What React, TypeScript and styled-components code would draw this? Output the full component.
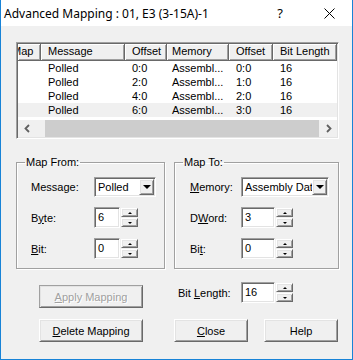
import React, { FC, ReactNode } from "react";
import styled, { createGlobalStyle } from "styled-components";

const columns = [
  { title: "Map", width: 23, indent: -6 },
  { title: "Message", width: 84, indent: 7 },
  { title: "Offset", width: 42, indent: 7 },
  { title: "Memory", width: 62, indent: 5 },
  { title: "Offset", width: 44, indent: 7 },
  { title: "Bit Length", width: 64, indent: 7 },
];

const rows = [
  ["", "Polled", "0:0", "Assembl...", "0:0", "16"],
  ["", "Polled", "2:0", "Assembl...", "1:0", "16"],
  ["", "Polled", "4:0", "Assembl...", "2:0", "16"],
  ["", "Polled", "6:0", "Assembl...", "3:0", "16"],
];

const gridTemplate = columns.map((c) => `${c.width}px`).join(" ");

const sunken = `
  border-style: solid;
  border-width: 1px;
  border-color: #a0a0a0 #fff #fff #a0a0a0;
  box-shadow: inset 1px 1px 0 #696969, inset -1px -1px 0 #e3e3e3;
`;

const raised = `
  border-style: solid;
  border-width: 1px;
  border-color: #fff #696969 #696969 #fff;
  box-shadow: inset 1px 1px 0 #e3e3e3, inset -1px -1px 0 #a0a0a0;
  background: #f0f0f0;
`;

const GlobalStyle = createGlobalStyle`
  html, body {
    margin: 0;
    padding: 0;
    background: #fff;
  }
  body {
    font-family: "Liberation Sans", Arial, sans-serif;
  }
  * {
    box-sizing: border-box;
  }
`;

type SpinProps = { value: string; editWidth: number };

const SpinEdit: FC<SpinProps> = ({ value, editWidth }) => (
  <StyledSpin>
    <StyledEdit $width={editWidth}>{value}</StyledEdit>
    <StyledSpinner>
      <StyledSpinButton>
        <StyledTinyArrow $up />
      </StyledSpinButton>
      <StyledSpinButton>
        <StyledTinyArrow />
      </StyledSpinButton>
    </StyledSpinner>
  </StyledSpin>
);

type ComboProps = { value: string; width: number };

const Combo: FC<ComboProps> = ({ value, width }) => (
  <StyledCombo $width={width}>
    <StyledComboText>{value}</StyledComboText>
    <StyledDropButton>
      <StyledDropArrow />
    </StyledDropButton>
  </StyledCombo>
);

type FieldProps = { label: ReactNode; labelWidth: number; children: ReactNode };

const Field: FC<FieldProps> = ({ label, labelWidth, children }) => (
  <StyledField>
    <StyledLabel $width={labelWidth}>{label}</StyledLabel>
    {children}
  </StyledField>
);

const Chevron: FC<{ right?: boolean }> = ({ right }) => (
  <svg width="8" height="9" viewBox="0 0 8 9">
    <polyline
      points={right ? "2,1 5.5,4.5 2,8" : "6,1 2.5,4.5 6,8"}
      fill="none"
      stroke="#606060"
      strokeWidth="1.8"
    />
  </svg>
);

export default function App() {
  return (
    <>
      <GlobalStyle />
      <StyledWindow>
        <StyledTitleBar>
          <StyledTitle>Advanced Mapping : 01, E3 (3-15A)-1</StyledTitle>
          <StyledCaptionButton>
            <StyledHelpGlyph>?</StyledHelpGlyph>
          </StyledCaptionButton>
          <StyledCaptionButton>
            <svg width="11" height="11" viewBox="0 0 11 11">
              <path d="M0.5 0.5 L10.5 10.5 M10.5 0.5 L0.5 10.5" stroke="#000" strokeWidth="1" />
            </svg>
          </StyledCaptionButton>
        </StyledTitleBar>

        <StyledBody>
          <StyledListView>
            <StyledHeaderRow>
              {columns.map((c, i) => (
                <StyledHeaderCell key={i} $indent={c.indent}>
                  {c.title}
                </StyledHeaderCell>
              ))}
            </StyledHeaderRow>
            {rows.map((r, i) => (
              <StyledRow key={i} $selected={i === rows.length - 1}>
                {r.map((v, j) => (
                  <StyledCell key={j} $indent={columns[j].indent}>
                    {v}
                  </StyledCell>
                ))}
              </StyledRow>
            ))}
            <StyledListFill />
            <StyledScrollBar>
              <StyledScrollArrow>
                <Chevron />
              </StyledScrollArrow>
              <StyledTrack>
                <StyledThumb />
              </StyledTrack>
              <StyledScrollArrow>
                <Chevron right />
              </StyledScrollArrow>
            </StyledScrollBar>
          </StyledListView>

          <StyledGroups>
            <StyledGroup $width={149}>
              <legend>Map From:</legend>
              <StyledGroupBody $padLeft={14}>
                <Field label="Message:" labelWidth={63}>
                  <Combo value="Polled" width={62} />
                </Field>
                <Field label={<>B<u>y</u>te:</>} labelWidth={63}>
                  <SpinEdit value="6" editWidth={26} />
                </Field>
                <Field label={<><u>B</u>it:</>} labelWidth={63}>
                  <SpinEdit value="0" editWidth={26} />
                </Field>
              </StyledGroupBody>
            </StyledGroup>
            <StyledGroup $width={165}>
              <legend>Map To:</legend>
              <StyledGroupBody $padLeft={15}>
                <Field label={<><u>M</u>emory:</>} labelWidth={51}>
                  <Combo value="Assembly Data" width={88} />
                </Field>
                <Field label={<>D<u>W</u>ord:</>} labelWidth={51}>
                  <SpinEdit value="3" editWidth={34} />
                </Field>
                <Field label={<>Bi<u>t</u>:</>} labelWidth={51}>
                  <SpinEdit value="0" editWidth={34} />
                </Field>
              </StyledGroupBody>
            </StyledGroup>
          </StyledGroups>

          <StyledActions>
            <StyledButton disabled $col={1}>
              <u>A</u>pply Mapping
            </StyledButton>
            <StyledBitLength>
              <StyledLabel $width={63}>
                Bit <u>L</u>ength:
              </StyledLabel>
              <SpinEdit value="16" editWidth={34} />
            </StyledBitLength>
            <StyledButton $col={1}>
              <u>D</u>elete Mapping
            </StyledButton>
            <StyledButton $col={3}>
              <u>C</u>lose
            </StyledButton>
            <StyledButton $col={5}>Help</StyledButton>
          </StyledActions>
        </StyledBody>
      </StyledWindow>
    </>
  );
}

const StyledWindow = styled.div`
  width: 353px;
  height: 360px;
  border: 1px solid #1883d7;
  border-top: none;
  background: #f0f0f0;
  display: flex;
  flex-direction: column;
  font-size: 11px;
  color: #000;
`;

const StyledTitleBar = styled.div`
  height: 26px;
  flex: none;
  background: #fff;
  display: flex;
  align-items: center;
  padding-left: 3px;
`;

const StyledTitle = styled.div`
  flex: 1;
  font-family: "Noto Sans", "Open Sans", sans-serif;
  font-size: 12px;
  white-space: nowrap;
`;

const StyledCaptionButton = styled.div`
  width: 46px;
  height: 26px;
  display: flex;
  align-items: center;
  justify-content: center;
`;

const StyledHelpGlyph = styled.span`
  font-family: "Noto Sans", sans-serif;
  font-size: 13px;
  margin-right: 6px;
`;

const StyledBody = styled.div`
  flex: 1;
  padding: 16px 13px 0 15px;
  display: flex;
  flex-direction: column;
`;

const StyledListView = styled.div`
  ${sunken}
  width: 323px;
  height: 97px;
  padding: 1px;
  background: #fff;
  display: flex;
  flex-direction: column;
  overflow: hidden;
`;

const StyledHeaderRow = styled.div`
  display: grid;
  grid-template-columns: ${gridTemplate};
  height: 17px;
  flex: none;
`;

const StyledHeaderCell = styled.div<{ $indent: number }>`
  background: #f0f0f0;
  border-right: 1px solid #696969;
  border-bottom: 1px solid #696969;
  box-shadow: inset 1px 1px 0 #fff, inset -1px -1px 0 #a0a0a0;
  line-height: 15px;
  text-indent: ${(p) => p.$indent}px;
  white-space: nowrap;
  overflow: hidden;
`;

const StyledRow = styled.div<{ $selected?: boolean }>`
  display: grid;
  grid-template-columns: ${gridTemplate};
  height: 14px;
  flex: none;
  background: ${(p) => (p.$selected ? "#f0f0f0" : "#fff")};
`;

const StyledCell = styled.div<{ $indent: number }>`
  line-height: 14px;
  text-indent: ${(p) => p.$indent}px;
  white-space: nowrap;
  overflow: hidden;
`;

const StyledListFill = styled.div`
  flex: 1;
`;

const StyledScrollBar = styled.div`
  height: 17px;
  flex: none;
  display: flex;
  background: #f0f0f0;
`;

const StyledScrollArrow = styled.div`
  width: 17px;
  display: flex;
  align-items: center;
  justify-content: center;
`;

const StyledTrack = styled.div`
  flex: 1;
  display: flex;
  padding: 0 1px 0 10px;
`;

const StyledThumb = styled.div`
  flex: 1;
  background: #cdcdcd;
`;

const StyledGroups = styled.div`
  display: flex;
  gap: 9px;
  margin-top: 17px;
`;

const StyledGroup = styled.fieldset<{ $width: number }>`
  width: ${(p) => p.$width}px;
  margin: 0;
  padding: 0;
  border: 1px solid #a0a0a0;
  box-shadow: inset 1px 1px 0 #fff, 1px 1px 0 #fff;

  legend {
    font-size: 11px;
    line-height: 13px;
    padding: 0 1px;
    margin-left: 8px;
  }
`;

const StyledGroupBody = styled.div<{ $padLeft: number }>`
  display: flex;
  flex-direction: column;
  gap: 10px;
  padding: 7px 0 9px ${(p) => p.$padLeft}px;
`;

const StyledField = styled.div`
  display: flex;
  align-items: center;
  height: 21px;
`;

const StyledLabel = styled.div<{ $width: number }>`
  width: ${(p) => p.$width}px;
  flex: none;
  white-space: nowrap;
`;

const StyledCombo = styled.div<{ $width: number }>`
  ${sunken}
  width: ${(p) => p.$width}px;
  height: 20px;
  background: #fff;
  display: flex;
  align-items: stretch;
  padding: 1px;
`;

const StyledComboText = styled.div`
  flex: 1;
  overflow: hidden;
  white-space: nowrap;
  padding-left: 2px;
  line-height: 16px;
`;

const StyledDropButton = styled.div`
  ${raised}
  width: 15px;
  flex: none;
  display: flex;
  align-items: center;
  justify-content: center;
`;

const StyledDropArrow = styled.div`
  width: 0;
  height: 0;
  border-left: 4px solid transparent;
  border-right: 4px solid transparent;
  border-top: 4px solid #000;
`;

const StyledSpin = styled.div`
  display: flex;
  gap: 1px;
  height: 21px;
`;

const StyledEdit = styled.div<{ $width: number }>`
  ${sunken}
  width: ${(p) => p.$width}px;
  background: #fff;
  padding: 1px 0 0 3px;
  line-height: 16px;
`;

const StyledSpinner = styled.div`
  width: 17px;
  display: flex;
  flex-direction: column;
  gap: 1px;
  padding: 1px 0;
`;

const StyledSpinButton = styled.div`
  ${raised}
  flex: 1;
  display: flex;
  align-items: center;
  justify-content: center;
`;

const StyledTinyArrow = styled.div<{ $up?: boolean }>`
  width: 0;
  height: 0;
  border-left: 2px solid transparent;
  border-right: 2px solid transparent;
  ${(p) => (p.$up ? "border-bottom: 2px solid #000;" : "border-top: 2px solid #000;")}
`;

const StyledActions = styled.div`
  display: grid;
  grid-template-columns: 104px 31px 74px 16px 74px;
  grid-template-rows: 26px 23px;
  row-gap: 11px;
  margin: 13px 0 0 23px;
`;

const StyledBitLength = styled.div`
  grid-column: 3 / 6;
  grid-row: 1;
  align-self: start;
  display: flex;
  align-items: center;
  padding-left: 4px;
`;

const StyledButton = styled.button<{ $col: number }>`
  ${raised}
  grid-column: ${(p) => p.$col};
  align-self: end;
  height: 23px;
  padding: 0;
  font-family: "Liberation Sans", Arial, sans-serif;
  font-size: 11px;
  color: #000;

  &:disabled {
    color: #a0a0a0;
    text-shadow: 1px 1px 0 #fff;
    border-color: #a0a0a0 #696969 #696969 #a0a0a0;
  }
`;
